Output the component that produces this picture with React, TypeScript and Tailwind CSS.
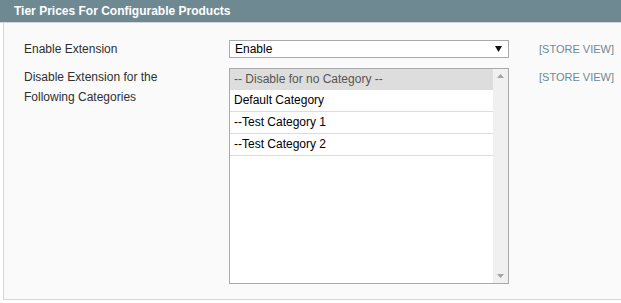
const categories = ["Default Category", "--Test Category 1", "--Test Category 2"];

export default function App() {
  return (
    <div className="h-[303px] w-[621px] bg-white font-['Liberation_Sans',Arial,sans-serif] text-[12px]">
      <div className="h-[23px] border-b border-[#d6d6d6] bg-[#6f8992] pl-[14px] text-[12px] font-bold leading-[22px] text-white">
        Tier Prices For Configurable Products
      </div>

      <div className="ml-[3px] h-[277px] border-b border-l border-[#d6d6d6] bg-[#fafafa] pl-[20px] pt-[17px]">
        {/* enable row */}
        <div className="flex items-center">
          <div className="w-[205px] text-[#2f2f2f]">Enable Extension</div>
          <div className="flex h-[18px] w-[280px] items-center justify-between border border-[#aaaaaa] bg-white pl-[5px] pr-[6px] text-black">
            <span>Enable</span>
            <svg width="7" height="6" viewBox="0 0 7 6">
              <polygon points="0,0 7,0 3.5,6" fill="#111" />
            </svg>
          </div>
          <div className="ml-[30px] text-[11px] text-[#6f8992]">[STORE VIEW]</div>
        </div>

        {/* categories row */}
        <div className="mt-[10px] flex items-start">
          <div className="-mt-px w-[205px] leading-[20px] text-[#2f2f2f]">
            <div className="w-[160px]">Disable Extension for the Following Categories</div>
          </div>
          <div className="flex h-[216px] w-[280px] border border-[#aaaaaa] bg-white">
            <div className="flex-1">
              <div className="h-[21px] bg-[#dedddd] pl-[4px] leading-[21px] text-[#555]">
                -- Disable for no Category --
              </div>
              {categories.map((c) => (
                <div key={c} className="h-[22px] border-b border-[#dcdcdc] pl-[4px] leading-[21px] text-black">
                  {c}
                </div>
              ))}
            </div>
            <div className="flex w-[15px] flex-col items-center justify-between bg-[#f0f0f0] py-[5px]">
              <svg width="7" height="4" viewBox="0 0 7 4">
                <polygon points="0,4 7,4 3.5,0" fill="#a3a3a3" />
              </svg>
              <svg width="7" height="4" viewBox="0 0 7 4">
                <polygon points="0,0 7,0 3.5,4" fill="#a3a3a3" />
              </svg>
            </div>
          </div>
          <div className="-mt-px ml-[30px] text-[11px] leading-[20px] text-[#6f8992]">[STORE VIEW]</div>
        </div>
      </div>
    </div>
  );
}
